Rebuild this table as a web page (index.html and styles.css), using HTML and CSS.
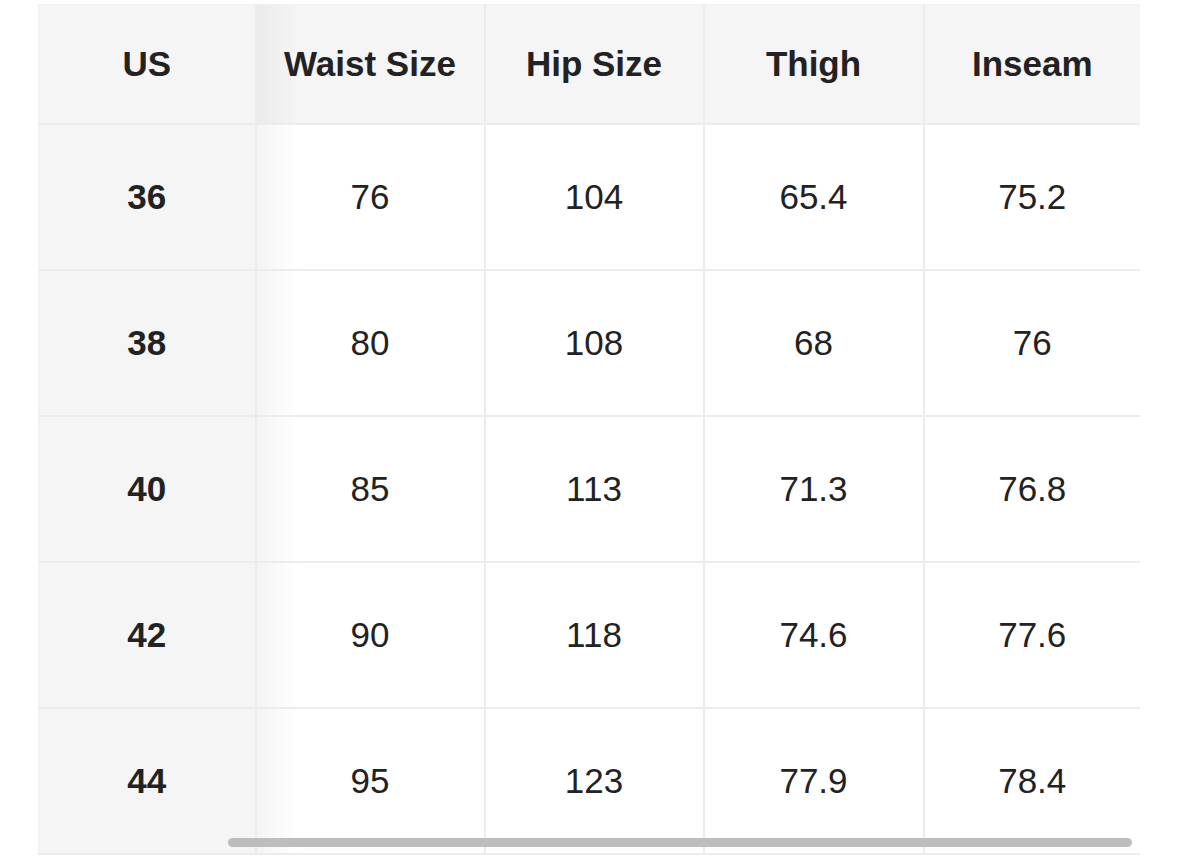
FILE: index.html
```html
<!DOCTYPE html>
<html lang="en">
<head>
<meta charset="utf-8">
<title>Size Chart</title>
<link rel="stylesheet" href="styles.css">
</head>
<body>
<div class="wrap">
  <div class="scroller">
    <table class="chart">
      <colgroup>
        <col class="c1"><col class="c2"><col class="c3"><col class="c4"><col class="c5">
      </colgroup>
      <thead>
        <tr>
          <th class="sticky">US</th>
          <th>Waist Size</th>
          <th>Hip Size</th>
          <th>Thigh</th>
          <th>Inseam</th>
        </tr>
      </thead>
      <tbody>
        <tr><th class="sticky">36</th><td>76</td><td>104</td><td>65.4</td><td>75.2</td></tr>
        <tr><th class="sticky">38</th><td>80</td><td>108</td><td>68</td><td>76</td></tr>
        <tr><th class="sticky">40</th><td>85</td><td>113</td><td>71.3</td><td>76.8</td></tr>
        <tr><th class="sticky">42</th><td>90</td><td>118</td><td>74.6</td><td>77.6</td></tr>
        <tr><th class="sticky">44</th><td>95</td><td>123</td><td>77.9</td><td>78.4</td></tr>
      </tbody>
    </table>
    <div class="scrollbar"></div>
  </div>
</div>
</body>
</html>
```

FILE: styles.css
```css
html, body {
  margin: 0;
  padding: 0;
  background: #ffffff;
}

body {
  font-family: "Liberation Sans", Arial, sans-serif;
  color: #222222;
}

.wrap {
  padding: 4px 0 0 38px;
}

.scroller {
  position: relative;
  width: 1102px;
  overflow: hidden;
}

.chart {
  width: 1102px;
  table-layout: fixed;
  border-collapse: collapse;
  border: 1px solid #f1f1f1;
}

.c1 { width: 217px; }
.c2 { width: 229px; }
.c3 { width: 219px; }
.c4 { width: 220px; }
.c5 { width: 217px; }

.chart th,
.chart td {
  border: 2px solid #ececec;
  text-align: center;
  vertical-align: middle;
  font-size: 35px;
  padding: 0;
}

.chart thead th {
  height: 118px;
  background: #f5f5f5;
  font-weight: bold;
}

.chart tbody th,
.chart tbody td {
  height: 144px;
}

.chart tbody th {
  font-weight: bold;
  background: #f5f5f5;
}

.chart td {
  font-weight: normal;
  background: #ffffff;
}

.chart thead th:first-child,
.chart tbody th {
  border-left: 1px solid #f1f1f1;
}

.chart th:last-child,
.chart td:last-child {
  border-right: 1px solid #f1f1f1;
}

.chart thead th {
  border-top: 1px solid #f1f1f1;
}

.sticky {
  position: relative;
}

.sticky::after {
  content: "";
  position: absolute;
  top: 0;
  bottom: 0;
  right: -44px;
  width: 42px;
  background: linear-gradient(to right, rgba(0, 0, 0, 0.045), rgba(0, 0, 0, 0));
  pointer-events: none;
}

.scrollbar {
  position: absolute;
  left: 190px;
  width: 904px;
  bottom: 8px;
  height: 9px;
  border-radius: 5px;
  background: #bdbdbd;
}
```
